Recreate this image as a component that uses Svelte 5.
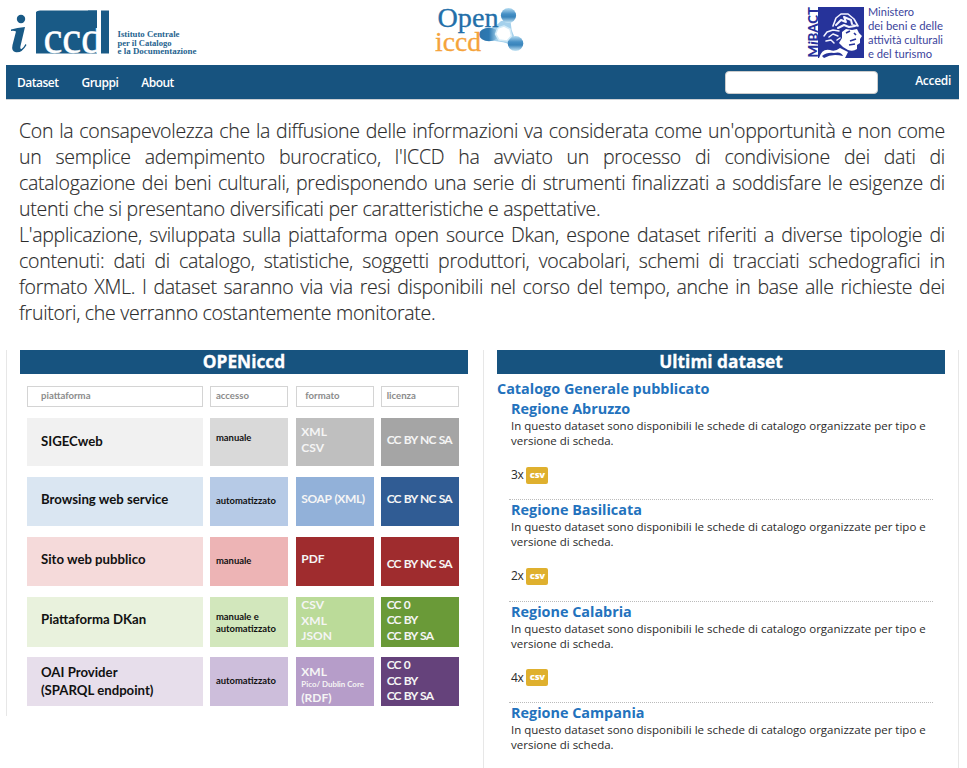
<script>
  const intro = [
    ["Con la consapevolezza che la diffusione delle informazioni va considerata come un'opportunità e non come", true],
    ["un semplice adempimento burocratico, l'ICCD ha avviato un processo di condivisione dei dati di", true],
    ["catalogazione dei beni culturali, predisponendo una serie di strumenti finalizzati a soddisfare le esigenze di", true],
    ["utenti che si presentano diversificati per caratteristiche e aspettative.", false],
    ["L'applicazione, sviluppata sulla piattaforma open source Dkan, espone dataset riferiti a diverse tipologie di", true],
    ["contenuti: dati di catalogo, statistiche, soggetti produttori, vocabolari, schemi di tracciati schedografici in", true],
    ["formato XML. I dataset saranno via via resi disponibili nel corso del tempo, anche in base alle richieste dei", true],
    ["fruitori, che verranno costantemente monitorate.", false]
  ];
  // each cell: [background, top padding, line height, lines]
  const rows = [
    { h: 48, gap: 11, cells: [
      ['#f1f1f1', 15, 16, ['SIGECweb']],
      ['#d9d9d9', 12, 16, ['manuale']],
      ['#bfbfbf', 6, 16, ['XML', 'CSV']],
      ['#a5a5a5', 14, 16, ['CC BY NC SA']]] },
    { h: 49, gap: 11, cells: [
      ['#dae6f2', 14, 16, ['Browsing web service']],
      ['#b6cae6', 16, 16, ['automatizzato']],
      ['#92b1d9', 14, 16, ['SOAP (XML)']],
      ['#305c94', 14, 16, ['CC BY NC SA']]] },
    { h: 49, gap: 11, cells: [
      ['#f5dada', 14, 16, ['Sito web pubblico']],
      ['#edb4b5', 16, 16, ['manuale']],
      ['#9f2c2e', 14, 16, ['PDF']],
      ['#9f2c2e', 19, 16, ['CC BY NC SA']]] },
    { h: 50, gap: 10, cells: [
      ['#e9f2dd', 14, 16, ['Piattaforma DKan']],
      ['#d2e7bc', 13.5, 12, ['manuale e', 'automatizzato']],
      ['#bbdb99', 0, 15.5, ['CSV', 'XML', 'JSON']],
      ['#6a9a38', -0.5, 15.5, ['CC 0', 'CC BY', 'CC BY SA']]] },
    { h: 49, gap: 0, cells: [
      ['#e7deeb', 7, 17.5, ['OAI Provider', '(SPARQL endpoint)']],
      ['#cdbedb', 16, 16, ['automatizzato']],
      ['#b69dc9', 8, 13, ['XML', 'Pico/ Dublin Core', '(RDF)']],
      ['#65427b', 0, 15.5, ['CC 0', 'CC BY', 'CC BY SA']]] }
  ];
  const datasets = [['Regione Abruzzo', 3], ['Regione Basilicata', 2], ['Regione Calabria', 4], ['Regione Campania', 0]];
</script>

<div class="page">
  <header>
    <svg class="iccd" width="200" height="58" viewBox="0 0 200 58">
      <g fill="#195a86">
        <circle cx="15" cy="19" r="4.2" />
        <path d="M5 29.500Q11 27.500 19 27L14.500 46Q13.800 49.200 15.500 49Q17.500 48 19.500 44L20.500 45Q16 53 10 52.300Q5 51.500 6.500 45L10 31.500Q8 30.500 5 31Z" />
        <path d="M30 12Q31 10.500 34 10.500H91V53.500H30Z" />
      </g>
      <text x="37.500" y="52.800" fill="#fff" stroke="#fff" stroke-width=".4" font-family="Liberation Serif" font-size="47" textLength="59" lengthAdjust="spacingAndGlyphs">ccd</text>
      <path d="M82 10.500H91V28H82Z" fill="#195a86" />
      <path d="M91 10H95V54H91Z" fill="#fff" />
      <path d="M95 10.500H103V53.500H95Z" fill="#195a86" />
      <g fill="#27648f" font-family="Liberation Serif" font-weight="bold" font-size="9">
        <text x="111.500" y="37.300" textLength="62" lengthAdjust="spacingAndGlyphs">Istituto Centrale</text>
        <text x="111.500" y="45.500" textLength="54" lengthAdjust="spacingAndGlyphs">per il Catalogo</text>
        <text x="111.500" y="53.700" textLength="79" lengthAdjust="spacingAndGlyphs">e la Documentazione</text>
      </g>
    </svg>
    <svg class="open" width="92" height="52" viewBox="0 0 92 52">
      <defs>
        <linearGradient id="ball" x1="0" y1="0" x2="0" y2="1"><stop offset="0" stop-color="#b5dcf1" /><stop offset=".4" stop-color="#458fc5" /><stop offset=".6" stop-color="#3984bb" /><stop offset="1" stop-color="#c9e7f6" /></linearGradient>
        <linearGradient id="left" x1="0" x2="1"><stop offset="0" stop-color="#2d73aa" /><stop offset=".5" stop-color="#2d79b2" /><stop offset="1" stop-color="#b5ddf1" /></linearGradient>
      </defs>
      <path d="M50 25Q60 24 66 17L76 16Q75 24 79 32L77 41Q70 38 60 37L50 36Z" fill="#a5d1ec" />
      <ellipse cx="73.500" cy="11.500" rx="7.600" ry="7.400" fill="url(#ball)" />
      <ellipse cx="54" cy="30.500" rx="10" ry="6.800" fill="url(#left)" />
      <ellipse cx="80.500" cy="39.500" rx="7.800" ry="7.600" fill="url(#ball)" />
      <path d="M63 24L69 22L75 25L76.500 32L72 37L64 36L60.500 30Z" fill="#fff" stroke="#d3ebf7" stroke-width="1.500" stroke-linejoin="round" />
      <g font-family="Liberation Serif">
        <text x="2.500" y="22.500" fill="#236fa9" stroke="#236fa9" stroke-width=".3" font-size="26.500" textLength="61" lengthAdjust="spacingAndGlyphs">Open</text>
        <text x="0" y="46.500" fill="#f5a33b" stroke="#f5a33b" stroke-width=".3" font-size="28" textLength="46" lengthAdjust="spacingAndGlyphs">iccd</text>
      </g>
    </svg>
    <svg class="mibact" width="145" height="54" viewBox="0 0 145 54">
      <path d="M16 2H62V53H16Z" fill="#26339a" />
      <text transform="translate(15.500 52.500) rotate(-90)" font-family="Lato" font-weight="900" font-size="13.500" fill="#27309a" textLength="50.500" lengthAdjust="spacingAndGlyphs">M<tspan font-style="italic">i</tspan>BACT</text>
      <path d="M40 27L44 24L50 25L55 24L57 28L60 31L58 34L58 38L55 40L55 44Q51 47 46 45L41 42L37 38L40 33Z" fill="#fff" />
      <path d="M17 53Q20 43 28 45Q33 47 38 43L46 47L43 53Z" fill="#fff" />
      <path d="M20 51Q25 47 32 48Q39 46 41 51Q30 48 22 53Z" fill="#26339a" />
      <g fill="none" stroke="#f4f4ff" stroke-linecap="round" stroke-linejoin="round">
        <path d="M31 21L34 13L39 9L46 9L52 14L56 21L51 20" stroke-width="1.600" />
        <path d="M34 20L39 15L44 17L42 12L49 15L50 19M36 23L42 20L47 22L53 21" stroke-width="2" />
        <path d="M22 31L25 27L31 25L37 26M27 32L31 29L36 31M24 36L29 35L32 38M35 35L38 33" stroke-width="1.500" />
      </g>
      <path d="M44 28L48 26M52 28L54 30M48 36L54 34M47 40L53 39" stroke="#26339a" stroke-width="1.700" />
      <g font-family="Lato" font-size="11.500" fill="#3b439c">
        <text x="66" y="10.800" textLength="46" lengthAdjust="spacingAndGlyphs">Ministero</text>
        <text x="66" y="24.800" textLength="75" lengthAdjust="spacingAndGlyphs">dei beni e delle</text>
        <text x="66" y="38.800" textLength="75" lengthAdjust="spacingAndGlyphs">attività culturali</text>
        <text x="66" y="52.600" textLength="64" lengthAdjust="spacingAndGlyphs">e del turismo</text>
      </g>
    </svg>
  </header>
  <nav>
    <a>Dataset</a><a>Gruppi</a><a>About</a>
    <input aria-label="Cerca" />
    <a class="login">Accedi</a>
  </nav>

  <div class="intro">
    {#each intro as [line, full]}<div class:full>{line}</div>{/each}
  </div>

  <main>
    <section class="left">
      <h2>OPENiccd</h2>
      <div class="chart">
        <div class="row head"><div>piattaforma</div><div>accesso</div><div>formato</div><div>licenza</div></div>
        {#each rows as r}
          <div class="row" style="height:{r.h}px;margin-bottom:{r.gap}px">
            {#each r.cells as [bg, top, lh, lines], i}
              <div class="cell c{i}" style="background:{bg};line-height:{lh}px">
                <div style="margin-top:{top}px">
                  {#each lines as l}<span class:soap={l.startsWith('SOAP')} class:tiny={l.startsWith('Pico')}>{l}</span>{/each}
                </div>
              </div>
            {/each}
          </div>
        {/each}
      </div>
    </section>
    <section class="right">
      <h2>Ultimi dataset</h2>
      <h3>Catalogo Generale pubblicato</h3>
      {#each datasets as [name, n]}
        <article>
          <h4>{name}</h4>
          <p>In questo dataset sono disponibili le schede di catalogo organizzate per tipo e versione di scheda.</p>
          {#if n}<div class="res">{n}x <b>csv</b></div>{/if}
        </article>
      {/each}
    </section>
  </main>
</div>

<style>
  :global(body) { background: #fff; overflow: hidden; }
  .page { width: 967px; height: 768px; overflow: hidden; box-sizing: border-box; padding: 0 8px 0 6px; font-family: "Open Sans", sans-serif; color: #2b2b2b; }
  header { height: 65px; display: flex; }
  svg { display: block; flex: none; }
  .iccd { width: 200px; }
  .open { margin: 4px 0 0 229px; }
  .mibact { margin: 5px 0 0 275px; overflow: visible; }
  nav { height: 35px; background: #17537f; border-bottom: 1px solid #cdd0d4; box-sizing: border-box; display: flex; align-items: center; padding: 0 8px 0 11px; }
  nav a { color: #fff; font-size: 12px; font-weight: 600; letter-spacing: -.5px; margin-right: 23px; line-height: 34px; padding-top: 2px; }
  nav input { width: 153px; height: 23px; box-sizing: border-box; border: 1px solid #ccc; border-radius: 4px; background: #fff; margin: 0 37px 0 auto; padding: 0; }
  nav .login { margin: -4px 0 0; letter-spacing: -.3px; }
  .intro { padding: 18px 14px 0 13px; font-size: 19.500px; letter-spacing: -.27px; font-weight: 300; line-height: 26px; height: 250px; box-sizing: border-box; -webkit-text-stroke: .15px #2b2b2b; }
  .intro div { white-space: nowrap; height: 26px; }
  .intro .full { white-space: normal; text-align-last: justify; }
  main { display: flex; align-items: flex-start; }
  section { box-sizing: border-box; }
  .left { width: 478px; height: 366px; padding: 0 15px 0 13px; border-left: 1px solid #e7e7e7; border-right: 1px solid #e7e7e7; }
  .right { height: 430px; padding: 0 13px; border-left: 1px solid #e7e7e7; border-right: 1px solid #e7e7e7; margin-left: -1px; flex: 1; }
  h2 { margin: 0; height: 24px; line-height: 24px; background: #17537f; color: #fff; text-align: center; font-size: 17.300px; font-weight: 700; -webkit-text-stroke: .3px #fff; }
  h3, h4 { margin: 0; color: #2372bd; font-size: 14.400px; font-weight: 700; line-height: 20px; }
  h3 { padding-top: 5px; }
  .chart { padding: 12px 0 0 7px; font-family: Lato, sans-serif; }
  .row { display: grid; grid-template-columns: 176px 78px 78px 78px; column-gap: 7.400px; }
  .head { height: 21px; margin-bottom: 11px; }
  .head div { border: 1px solid #d4d4d4; font-size: 9.600px; font-weight: 700; color: #8b8b8b; line-height: 17px; padding-left: 4.500px; }
  .head div:first-child { padding-left: 13px; }
  .head div:nth-child(3) { padding-left: 8.500px; }
  .cell { display: flow-root; box-sizing: border-box; padding-left: 5.500px; font-weight: 700; color: #111; overflow: hidden; white-space: nowrap; }
  .cell span { display: block; }
  .c0 { padding-left: 14px; font-size: 13.200px; }
  .c1 { font-size: 9.450px; }
  .c2, .c3 { color: #f5f5f5; font-size: 12px; }
  .c3 { letter-spacing: -.8px; word-spacing: .9px; }
  .c2 .soap { letter-spacing: -.4px; word-spacing: .8px; }
  .c2 .tiny { font-size: 7.900px; }
  article { height: 101.300px; box-sizing: border-box; margin: 0 12px 0 12px; padding: 0 0 0 2px; border-bottom: 1px dotted #bbb; }
  h4 { height: 19px; }
  p { margin: 0; font-size: 11.500px; line-height: 15px; height: 30px; }
  .res { font-size: 12px; letter-spacing: -.4px; line-height: 18px; margin-top: 18px; display: flex; gap: 3px; align-items: center; }
  .res b { background: #dfb02e; color: #fff; width: 22px; height: 17px; border-radius: 2px; text-align: center; font-size: 9.500px; letter-spacing: -.2px; line-height: 16px; font-weight: 800; }
</style>
